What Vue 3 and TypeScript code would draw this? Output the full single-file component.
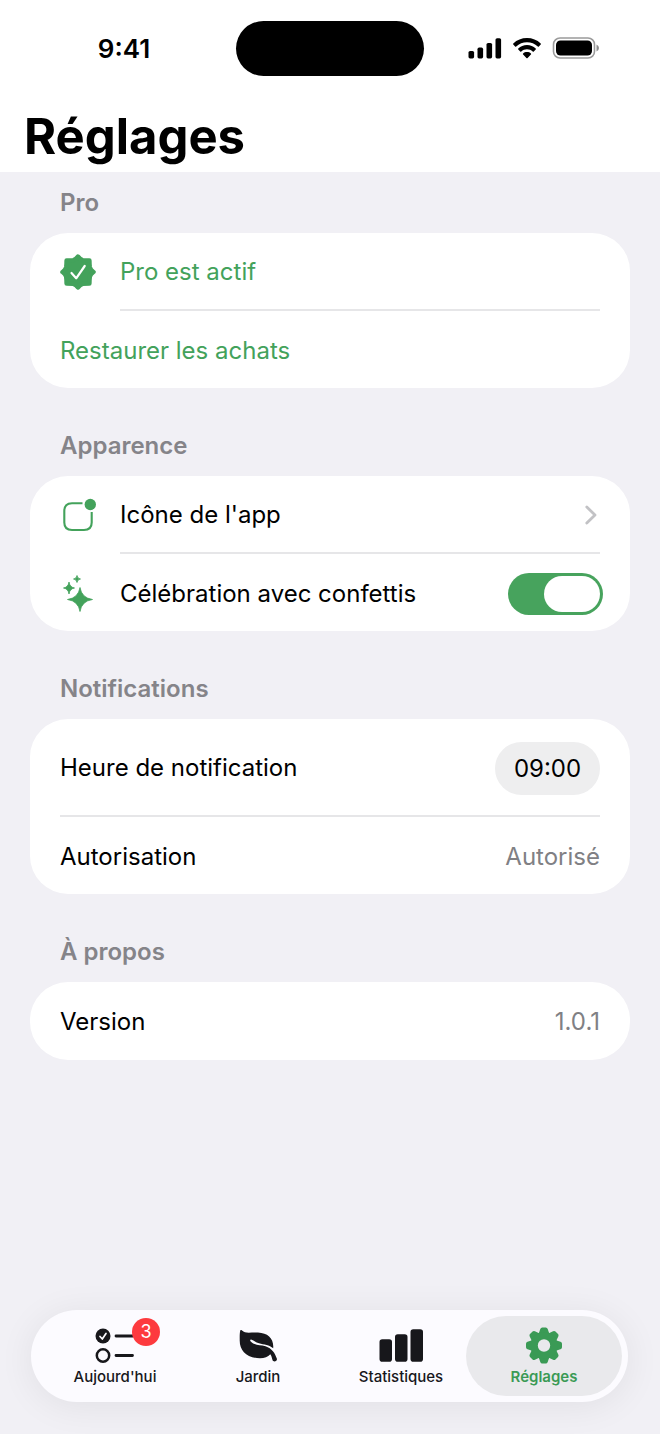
<script setup lang="ts">
import { ref } from 'vue'

type TabId = 'today' | 'garden' | 'stats' | 'settings'

interface Tab {
  id: TabId
  label: string
  badge?: number
}

const tabs: Tab[] = [
  { id: 'today', label: "Aujourd'hui", badge: 3 },
  { id: 'garden', label: 'Jardin' },
  { id: 'stats', label: 'Statistiques' },
  { id: 'settings', label: 'Réglages' },
]

const activeTab = ref<TabId>('settings')
const confetti = ref(true)
const notificationTime = ref('09:00')
</script>

<template>
  <div class="screen">
    <header class="top">
      <div class="status">
        <span class="clock">9:41</span>
        <span class="island"></span>
        <span class="indicators">
          <svg width="34" height="22" viewBox="0 0 34 22" aria-hidden="true">
            <rect x="0.5" y="14" width="5.6" height="7.4" rx="1.6" />
            <rect x="9.5" y="10.6" width="5.6" height="10.8" rx="1.6" />
            <rect x="18.5" y="6" width="5.6" height="15.4" rx="1.6" />
            <rect x="27.5" y="1.2" width="5.6" height="20.2" rx="1.6" />
          </svg>
          <svg width="30" height="22" viewBox="0 0 30 22" aria-hidden="true">
            <path d="M15 1C9.700 1 4.900 3 1.300 6.400Q.700 7 1.300 7.600L3.100 9.400Q3.600 9.900 4.200 9.400C7.100 6.700 10.900 5.200 15 5.200S22.900 6.700 25.800 9.400Q26.400 9.900 26.900 9.400L28.700 7.600Q29.300 7 28.700 6.400C25.100 3 20.300 1 15 1Z" />
            <path d="M15 8C11.600 8 8.600 9.300 6.300 11.400Q5.700 12 6.300 12.600L8.200 14.500Q8.700 15 9.300 14.500C10.800 13.100 12.800 12.200 15 12.200S19.200 13.100 20.700 14.500Q21.300 15 21.800 14.500L23.700 12.600Q24.300 12 23.700 11.400C21.400 9.300 18.400 8 15 8Z" />
            <path d="M15 15C13.500 15 12.100 15.500 11.100 16.400Q10.500 17 11.100 17.600L14.400 20.900Q15 21.500 15.600 20.900L18.900 17.600Q19.500 17 18.900 16.400C17.900 15.500 16.500 15 15 15Z" />
          </svg>
          <svg width="48" height="22" viewBox="0 0 48 22" aria-hidden="true">
            <rect x="1.500" y="1" width="41" height="20" rx="6.500" fill="none" stroke="#9b9b9b" stroke-width="1.600" />
            <rect x="4" y="3.500" width="36" height="15" rx="4.500" />
            <path d="M44.500 7.500Q47 8.500 47 11T44.500 14.500Z" fill="#8d8d8d" />
          </svg>
        </span>
      </div>
      <h1>Réglages</h1>
    </header>

    <main>
      <section>
        <h2>Pro</h2>
        <div class="card">
          <div class="row green">
            <svg class="glyph" width="36" height="36" viewBox="0 0 36 36" aria-hidden="true">
              <path d="M18 2.500Q20 5.500 22.800 6.200Q25.500 6.600 29.400 6.600Q29.400 10.500 29.800 13.200Q30.500 16 33.500 18Q30.500 20 29.800 22.800Q29.400 25.500 29.400 29.400Q25.500 29.400 22.800 29.800Q20 30.500 18 33.500Q16 30.500 13.200 29.800Q10.500 29.400 6.600 29.400Q6.600 25.500 6.200 22.800Q5.500 20 2.500 18Q5.500 16 6.200 13.200Q6.600 10.500 6.600 6.600Q10.500 6.600 13.200 6.200Q16 5.500 18 2.500Z" fill="currentColor" stroke="currentColor" stroke-width="4.500" stroke-linejoin="round" />
              <path d="M11.500 19L16.200 24.300L24.700 12" fill="none" stroke="#fff" stroke-width="2.200" stroke-linecap="round" stroke-linejoin="round" />
            </svg>
            <div class="line"><span>Pro est actif</span></div>
          </div>
          <div class="row">
            <button type="button" class="line green">Restaurer les achats</button>
          </div>
        </div>
      </section>

      <section>
        <h2>Apparence</h2>
        <div class="card">
          <div class="row">
            <svg class="glyph green" width="36" height="36" viewBox="0 0 36 36" aria-hidden="true">
              <path d="M22.500 6.200H12Q4.300 6.200 4.300 14V25.500Q4.300 33 12 33H24Q31.700 33 31.700 25.500V15" fill="none" stroke="currentColor" stroke-width="2.100" />
              <circle cx="30.300" cy="7.500" r="5.700" fill="currentColor" />
            </svg>
            <button type="button" class="line">
              <span>Icône de l'app</span>
              <svg width="12" height="20" viewBox="0 0 12 20" aria-hidden="true">
                <path d="M1.800 2L10 10L1.800 18" fill="none" stroke="#c2c2c5" stroke-width="2.800" stroke-linecap="round" stroke-linejoin="round" />
              </svg>
            </button>
          </div>
          <div class="row">
            <svg class="glyph green" width="36" height="38" viewBox="0 0 36 38" aria-hidden="true">
              <g fill="currentColor" stroke="currentColor" stroke-width="0.800" stroke-linejoin="round">
                <path d="M20 13.500Q21.600 23.900 32.500 25.500Q21.600 27.100 20 37.500Q18.400 27.100 7.500 25.500Q18.400 23.900 20 13.500Z" />
                <path d="M9 8Q9.700 13.200 14.500 14Q9.700 14.800 9 20Q8.300 14.800 3.500 14Q8.300 13.200 9 8Z" />
                <path d="M17 1.500Q17.400 4.600 20.500 5Q17.400 5.400 17 8.500Q16.600 5.400 13.500 5Q16.600 4.600 17 1.500Z" />
              </g>
            </svg>
            <div class="line">
              <label for="confetti">Célébration avec confettis</label>
              <input id="confetti" v-model="confetti" class="switch" type="checkbox" role="switch" />
            </div>
          </div>
        </div>
      </section>

      <section>
        <h2>Notifications</h2>
        <div class="card">
          <div class="row tall">
            <div class="line">
              <label for="time">Heure de notification</label>
              <input id="time" v-model="notificationTime" class="time" type="text" inputmode="numeric" />
            </div>
          </div>
          <div class="row">
            <div class="line"><span>Autorisation</span><span class="value">Autorisé</span></div>
          </div>
        </div>
      </section>

      <section>
        <h2>À propos</h2>
        <div class="card">
          <div class="row">
            <div class="line"><span>Version</span><span class="value">1.0.1</span></div>
          </div>
        </div>
      </section>
    </main>

    <nav class="tabbar">
      <button
        v-for="tab in tabs"
        :key="tab.id"
        type="button"
        class="tab"
        :class="{ active: tab.id === activeTab }"
        @click="activeTab = tab.id"
      >
        <span class="tab-icon">
          <svg v-if="tab.id === 'today'" width="44" height="40" viewBox="0 0 44 40" aria-hidden="true">
            <circle cx="10" cy="10" r="7.500" fill="currentColor" />
            <path d="M7 10.500L9.300 13L13 7.500" fill="none" stroke="#fcfbff" stroke-width="1.700" stroke-linecap="round" stroke-linejoin="round" />
            <circle cx="10" cy="29.500" r="6.200" fill="none" stroke="currentColor" stroke-width="2.500" />
            <path d="M23 10H40M23 29.500H39.500" stroke="currentColor" stroke-width="2.800" stroke-linecap="round" />
          </svg>
          <svg v-else-if="tab.id === 'garden'" width="44" height="40" viewBox="0 0 44 40" aria-hidden="true">
            <path d="M4.300 4.500C4.600 3.800 5.400 4 6 4.500C9.500 8 15 6 22 6.500C32 7 38 12.500 37.200 22.300C33.500 18.800 28 18.600 23 17.200C19 16.200 17.300 14.200 15.100 13.600C14.200 13.500 13.900 14.500 14.500 15.200C19 20 24 18.600 29.500 20.300C36 22.500 39 27 40.900 32.800C41.400 35.500 37.300 36.500 36.500 34C35.700 31.500 35.600 29.800 34.300 28.200C32 31 28.500 32.200 24 32.200C11 32.200 3.700 25 3.700 14.500C3.700 10.500 3.600 7 4.300 4.500Z" fill="currentColor" />
          </svg>
          <svg v-else-if="tab.id === 'stats'" width="44" height="40" viewBox="0 0 44 40" aria-hidden="true">
            <g fill="currentColor">
              <rect x="0.500" y="13.300" width="12.500" height="22.400" rx="2.800" />
              <rect x="16" y="8.300" width="12.500" height="27.400" rx="2.800" />
              <rect x="31.500" y="3.300" width="12.500" height="32.400" rx="2.800" />
            </g>
          </svg>
          <svg v-else width="44" height="40" viewBox="0 0 44 40" aria-hidden="true">
            <g fill="currentColor" transform="translate(22 19.500)">
              <path
                v-for="n in 8"
                :key="n"
                :transform="`rotate(${n * 45})`"
                d="M-5.600 -11L-3.700 -16.500Q-3.200 -18 -1.800 -18H1.800Q3.200 -18 3.700 -16.500L5.600 -11Z"
              />
              <path fill-rule="evenodd" d="M0 -13.500A13.500 13.500 0 1 1 0 13.500A13.500 13.500 0 1 1 0 -13.500ZM0 -6.200A6.200 6.200 0 1 0 0 6.200A6.200 6.200 0 1 0 0 -6.200Z" />
            </g>
          </svg>
          <span v-if="tab.badge" class="badge">{{ tab.badge }}</span>
        </span>
        <span class="tab-label">{{ tab.label }}</span>
      </button>
    </nav>
  </div>
</template>

<style>
body {
  background: #f1f0f5;
}
</style>

<style scoped>
.screen {
  box-sizing: border-box;
  min-height: 100vh;
  display: flex;
  flex-direction: column;
  background: #f1f0f5;
  color: #000;
  font-family: Inter, "Liberation Sans", sans-serif;
  font-size: 24px;
  line-height: 32px;
}

button,
input {
  margin: 0;
  padding: 0;
  border: 0;
  background: none;
  color: inherit;
  font: inherit;
}

button {
  cursor: pointer;
}

svg {
  display: block;
  flex: none;
}

.top {
  background: #fff;
  padding: 20px 24px 3px;
}

.status {
  display: grid;
  grid-template-columns: 1fr 188px 1fr;
  align-items: center;
  height: 56px;
}

.clock {
  justify-self: center;
  font-size: 26px;
  font-weight: 600;
  padding: 2px 12px 0 0;
}

.island {
  height: 55px;
  border-radius: 28px;
  background: #000;
}

.indicators {
  justify-self: center;
  display: flex;
  align-items: center;
  gap: 10px;
  padding-left: 7px;
}

h1 {
  margin: 29px 0 0;
  font-size: 49px;
  line-height: 64px;
  font-weight: 700;
}

main {
  display: flex;
  flex-direction: column;
  gap: 28px;
  padding: 1px 30px 24px;
}

h2 {
  margin: 0;
  padding: 0 30px;
  font-size: 24px;
  line-height: 60px;
  font-weight: 600;
  color: #858489;
}

.card {
  border-radius: 38px;
  background: #fff;
  padding: 0 30px;
}

.row {
  display: flex;
  align-items: center;
}

.glyph {
  margin-right: 24px;
}

.line {
  box-sizing: border-box;
  flex: 1;
  display: flex;
  align-items: center;
  justify-content: space-between;
  min-height: 78px;
  padding-top: 2px;
  text-align: left;
}

.row:not(:last-child) .line {
  border-bottom: 2px solid #e6e6e8;
}

.row + .row .line {
  min-height: 77px;
}

.tall .line {
  min-height: 98px;
}

.green {
  color: #43a25b;
}

.value {
  color: #808084;
}

.line > svg {
  margin-right: 3px;
}

.switch {
  appearance: none;
  box-sizing: border-box;
  width: 95px;
  height: 42px;
  margin-right: -3px;
  padding: 3px;
  border-radius: 21px;
  background: #d9d9dc;
  cursor: pointer;
}

.switch::before {
  content: "";
  display: block;
  width: 56px;
  height: 36px;
  border-radius: 18px;
  background: #fff;
}

.switch:checked {
  background: #47a35d;
}

.switch:checked::before {
  margin-left: auto;
}

.time {
  width: 105px;
  height: 53px;
  border-radius: 27px;
  background: #eeeeef;
  text-align: center;
}

.tabbar {
  position: sticky;
  bottom: 32px;
  display: flex;
  margin: auto 32px 32px 31px;
  padding: 6px;
  border-radius: 46px;
  background: #fcfbff;
  box-shadow: 0 4px 36px rgba(0, 0, 0, 0.07);
}

.tab {
  flex: 1;
  display: flex;
  flex-direction: column;
  align-items: center;
  height: 80px;
  padding-top: 10px;
  box-sizing: border-box;
  border-radius: 40px;
  color: #17171b;
}

.tab + .tab {
  margin-left: -13px;
}

.tab.active {
  background: #e9e9ec;
  color: #3a9a55;
}

.tab-icon {
  position: relative;
}

.tab-label {
  font-size: 15px;
  line-height: 22px;
  font-weight: 500;
}

.active .tab-label {
  font-weight: 600;
}

.badge {
  position: absolute;
  top: -8px;
  right: -23px;
  width: 28px;
  height: 28px;
  border-radius: 14px;
  background: #fd3a3e;
  color: #fff;
  font-size: 18px;
  line-height: 28px;
  text-align: center;
}
</style>
